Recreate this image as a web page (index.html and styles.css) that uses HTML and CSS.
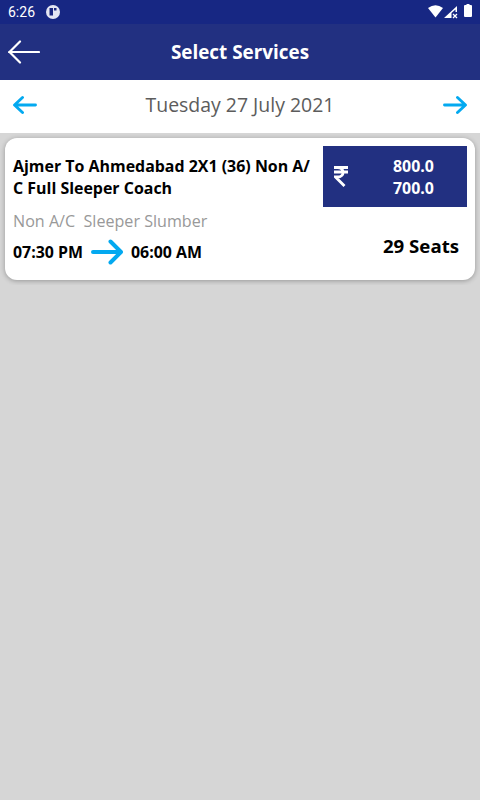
FILE: index.html
```html
<!DOCTYPE html>
<html lang="en">
<head>
  <meta charset="UTF-8">
  <title>Select Services</title>
  <link rel="stylesheet" href="styles.css">
</head>
<body>
  <div class="status-bar">
    <span class="clock">6:26</span>
    <svg class="app-icon" width="14" height="14" viewBox="0 0 14 14"><circle cx="7" cy="7" r="7" fill="#e4e6f3"/><path d="M3.500 3H7v7.500H3.500zM8 3h2.500v2.500H8z" fill="#1a2780"/></svg>
    <svg class="system-icons" width="44" height="16" viewBox="0 0 44 16">
      <path d="M0 4Q7.500-1.500 15 4L7.500 13.500z" fill="#fff"/>
      <path d="M16 14L29 2v6h-1.500V5.500L23.500 9v5z" fill="#fff"/>
      <path d="M25 10l4 4M29 10l-4 4" stroke="#fff" stroke-width="1.300"/>
      <path d="M36 2q0-1 1-1h1.500V0h3v1H43q1 0 1 1v10q0 1-1 1h-6q-1 0-1-1z" fill="#fff"/>
    </svg>
  </div>

  <header class="header">
    <svg class="back" width="32" height="24" viewBox="0 0 32 24"><path d="M12 1.500L1.500 12L12 22.500M1 12h30"/></svg>
    <h1>Select Services</h1>
  </header>

  <div class="date-bar">
    <svg class="arrow" width="24" height="20" viewBox="0 0 24 20"><path d="M9.500 2.500L1.500 10l8 7.500M2 10h20.500"/></svg>
    <span class="date">Tuesday 27 July 2021</span>
    <svg class="arrow" width="24" height="20" viewBox="0 0 24 20"><path d="M14.500 2.500l8 7.500-8 7.500M22 10H1.500"/></svg>
  </div>

  <div class="card">
    <div class="service">
      <h2>Ajmer To Ahmedabad 2X1 (36) Non A/<br>C Full Sleeper Coach</h2>
      <p class="type">Non A/C&nbsp; Sleeper Slumber</p>
      <div class="times">
        <span>07:30 PM</span>
        <svg class="arrow arrow-large" width="32" height="26" viewBox="0 0 32 26"><path d="M19.500 2.500L30 13 19.500 23.500M29 13H2"/></svg>
        <span>06:00 AM</span>
      </div>
    </div>
    <div class="side">
      <div class="fare">
        <svg width="14" height="22" viewBox="0 0 14 22"><path d="M0 1.500h14M0 6h14M0 1.500h3.500c7.500 0 7.500 9.500 0 9.500H1.500l9 9"/></svg>
        <div class="prices">800.0<br>700.0</div>
      </div>
      <div class="seats">29 Seats</div>
    </div>
  </div>
</body>
</html>
```
FILE: styles.css
```css
* { box-sizing: border-box; }
body {
  margin: 0;
  background: #d6d6d6;
  font-family: "Open Sans", sans-serif;
  color: #000;
}
h1, h2, p { margin: 0; }
svg { display: block; flex: none; }
.status-bar {
  display: flex;
  align-items: center;
  height: 24px;
  padding: 0 8px;
  background: #172783;
  color: #fff;
}
.clock {
  font: 14px Roboto, sans-serif;
}
.app-icon { margin-left: 11px; }
.system-icons { margin-left: auto; }
.header {
  display: flex;
  align-items: center;
  height: 56px;
  padding: 0 8px;
  background: #223081;
  color: #fff;
}
.header h1 {
  flex: 1;
  padding-right: 32px;
  font-size: 18.900px;
  font-weight: 700;
  line-height: 26px;
  text-align: center;
}
.back path {
  fill: none;
  stroke: #fff;
  stroke-width: 2.200;
  stroke-linecap: round;
}
.date-bar {
  display: flex;
  align-items: center;
  justify-content: space-between;
  height: 53px;
  padding: 0 13px 3px;
  background: #fff;
}
.date {
  padding-bottom: 1px;
  font-size: 19.450px;
  color: #5c5c5c;
}
.arrow path {
  fill: none;
  stroke: #03a9f0;
  stroke-width: 2.900;
  stroke-linecap: round;
  stroke-linejoin: round;
}
.arrow-large path { stroke-width: 4; }
.card {
  display: flex;
  justify-content: space-between;
  height: 142px;
  margin: 5px;
  padding: 8px;
  border-radius: 12px;
  background: #fff;
  box-shadow: 0 1px 5px rgba(0,0,0,0.3);
}
.service h2 {
  padding-top: 9px;
  font-size: 15.950px;
  font-weight: 700;
  line-height: 22px;
  white-space: nowrap;
}
.type {
  margin-top: 11px;
  font-size: 16.120px;
  line-height: 22px;
  color: #999;
}
.times {
  display: flex;
  align-items: center;
  gap: 8px;
  margin-top: 7px;
  font-size: 15.900px;
  font-weight: 700;
}
.side { width: 144px; }
.fare {
  display: flex;
  align-items: center;
  height: 61px;
  padding-left: 11px;
  background: #223081;
  color: #fff;
}
.fare path {
  fill: none;
  stroke: #fff;
  stroke-width: 2.800;
}
.prices {
  margin-left: 45px;
  font-size: 15.900px;
  font-weight: 700;
  line-height: 22px;
}
.seats {
  margin-top: 26px;
  padding-right: 8px;
  font-size: 18.650px;
  font-weight: 700;
  line-height: 26px;
  text-align: right;
}
```
